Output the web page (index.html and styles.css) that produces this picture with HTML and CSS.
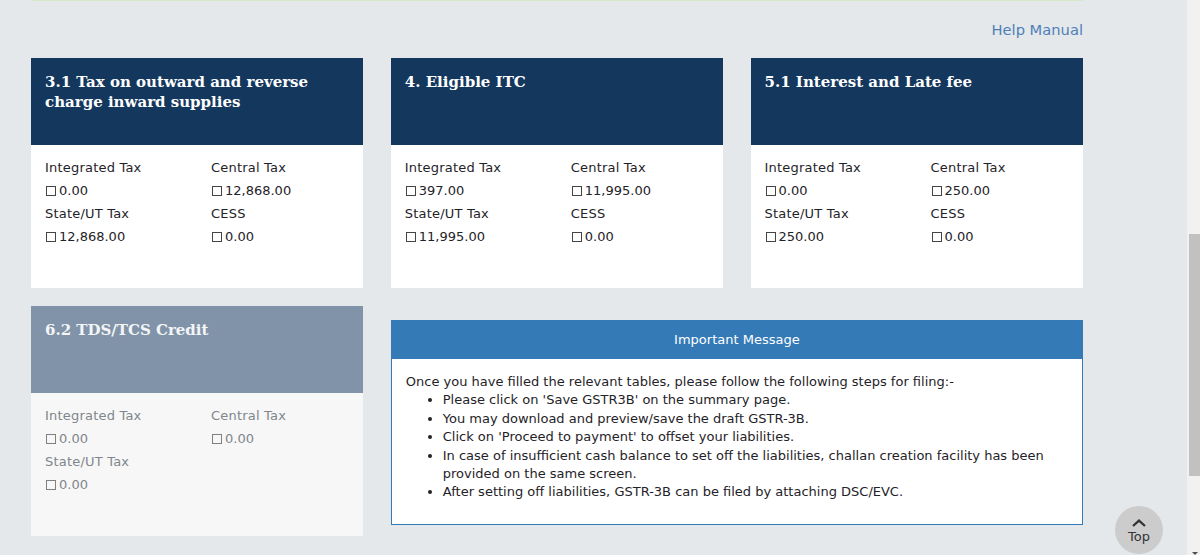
FILE: index.html
```html
<!DOCTYPE html>
<html lang="en">
<head>
<meta charset="utf-8">
<title>GSTR-3B</title>
<link rel="stylesheet" href="styles.css">
</head>
<body>
<main class="page">
  <div class="rule"></div>
  <div class="help-row"><a class="help" href="#">Help Manual</a></div>
  <div class="grid">
    <section class="card">
      <h2 class="card-head">3.1 Tax on outward and reverse charge inward supplies</h2>
      <div class="card-body">
        <div class="item"><div class="label">Integrated Tax</div><div><span class="cur"></span>0.00</div></div>
        <div class="item"><div class="label">Central Tax</div><div><span class="cur"></span>12,868.00</div></div>
        <div class="item"><div class="label">State/UT Tax</div><div><span class="cur"></span>12,868.00</div></div>
        <div class="item"><div class="label">CESS</div><div><span class="cur"></span>0.00</div></div>
      </div>
    </section>
    <section class="card">
      <h2 class="card-head">4. Eligible ITC</h2>
      <div class="card-body">
        <div class="item"><div class="label">Integrated Tax</div><div><span class="cur"></span>397.00</div></div>
        <div class="item"><div class="label">Central Tax</div><div><span class="cur"></span>11,995.00</div></div>
        <div class="item"><div class="label">State/UT Tax</div><div><span class="cur"></span>11,995.00</div></div>
        <div class="item"><div class="label">CESS</div><div><span class="cur"></span>0.00</div></div>
      </div>
    </section>
    <section class="card">
      <h2 class="card-head">5.1 Interest and Late fee</h2>
      <div class="card-body">
        <div class="item"><div class="label">Integrated Tax</div><div><span class="cur"></span>0.00</div></div>
        <div class="item"><div class="label">Central Tax</div><div><span class="cur"></span>250.00</div></div>
        <div class="item"><div class="label">State/UT Tax</div><div><span class="cur"></span>250.00</div></div>
        <div class="item"><div class="label">CESS</div><div><span class="cur"></span>0.00</div></div>
      </div>
    </section>
    <section class="card card-disabled">
      <h2 class="card-head">6.2 TDS/TCS Credit</h2>
      <div class="card-body">
        <div class="item"><div class="label">Integrated Tax</div><div><span class="cur"></span>0.00</div></div>
        <div class="item"><div class="label">Central Tax</div><div><span class="cur"></span>0.00</div></div>
        <div class="item"><div class="label">State/UT Tax</div><div><span class="cur"></span>0.00</div></div>
      </div>
    </section>
    <section class="message">
      <div class="message-head">Important Message</div>
      <div class="message-body">
        <p>Once you have filled the relevant tables, please follow the following steps for filing:-</p>
        <ul>
          <li>Please click on 'Save GSTR3B' on the summary page.</li>
          <li>You may download and preview/save the draft GSTR-3B.</li>
          <li>Click on 'Proceed to payment' to offset your liabilities.</li>
          <li>In case of insufficient cash balance to set off the liabilities, challan creation facility has been provided on the same screen.</li>
          <li>After setting off liabilities, GSTR-3B can be filed by attaching DSC/EVC.</li>
        </ul>
      </div>
    </section>
  </div>
</main>
<a class="top" href="#">
  <svg class="top-icon" width="14" height="8" viewBox="0 0 14 8"><path d="M1 7 L7 1.6 L13 7" fill="none" stroke="#333" stroke-width="2.2"/></svg>
  <span>Top</span>
</a>
<div class="scrollbar"><div class="thumb"></div><div class="arrow"></div></div>
</body>
</html>
```
FILE: styles.css
```css
* { box-sizing: border-box; }
html, body { margin: 0; height: 555px; overflow: hidden; }
body {
  background: #e4e8eb;
  color: #1f2328;
  font-family: "DejaVu Sans", Verdana, sans-serif;
  font-size: 13px;
}
.page { width: 1052px; margin-left: 31px; }
.rule { height: 1px; background: #d5e8c8; }
.help-row { display: flex; justify-content: flex-end; padding-top: 19px; height: 57px; }
.help { color: #4f80b5; font-size: 14.7px; line-height: 20px; text-decoration: none; }
.grid { display: grid; grid-template-columns: repeat(3, 1fr); column-gap: 27.33px; row-gap: 18px; align-items: start; }
.card { background: #fff; height: 230px; }
.card-head {
  margin: 0;
  height: 87px;
  padding: 14px 14px 0;
  background: #14375e;
  color: #fff;
  font-family: "DejaVu Serif", Georgia, serif;
  font-size: 15px;
  font-weight: 700;
  line-height: 20px;
}
.card-body { display: grid; grid-template-columns: 166px 1fr; padding: 11px 14px 0; line-height: 23px; }
.item { min-width: 0; }
.label { letter-spacing: 0.2px; }
.cur { display: inline-block; width: 10px; height: 10px; margin: 0 3px 0 1px; border: 1px solid #444; vertical-align: -1px; }
.card-disabled { background: #f7f7f7; color: #80868c; }
.card-disabled .card-head { background: #8093a8; color: #f3f5f7; }
.card-disabled .cur { border-color: #808080; }
.message { grid-column: 2 / 4; margin-top: 14px; height: 205px; background: #fff; border: 1px solid #337ab7; }
.message-head { height: 39px; margin: -1px -1px 0; background: #337ab7; color: #fff; text-align: center; line-height: 39px; }
.message-body { padding: 14px 14px 0; line-height: 18.4px; }
.message-body p { margin: 0; }
.message-body ul { margin: 0; padding-left: 37px; }
.top {
  position: fixed;
  left: 1115px;
  top: 506px;
  width: 48px;
  height: 48px;
  border-radius: 50%;
  background: #cccccc;
  color: #333;
  text-decoration: none;
  display: flex;
  flex-direction: column;
  align-items: center;
  padding-top: 13px;
  line-height: 16px;
}
.top-icon { display: block; margin-bottom: 2px; }
.scrollbar { position: fixed; right: 0; top: 0; width: 13px; height: 555px; background: #f1f1f1; }
.thumb { position: absolute; left: 2px; top: 234px; width: 11px; height: 242px; background: #c1c1c1; }
.arrow { position: absolute; left: 5px; bottom: 0; width: 0; height: 0; border-left: 3.5px solid transparent; border-right: 3.5px solid transparent; border-top: 3px solid #505050; }
```
